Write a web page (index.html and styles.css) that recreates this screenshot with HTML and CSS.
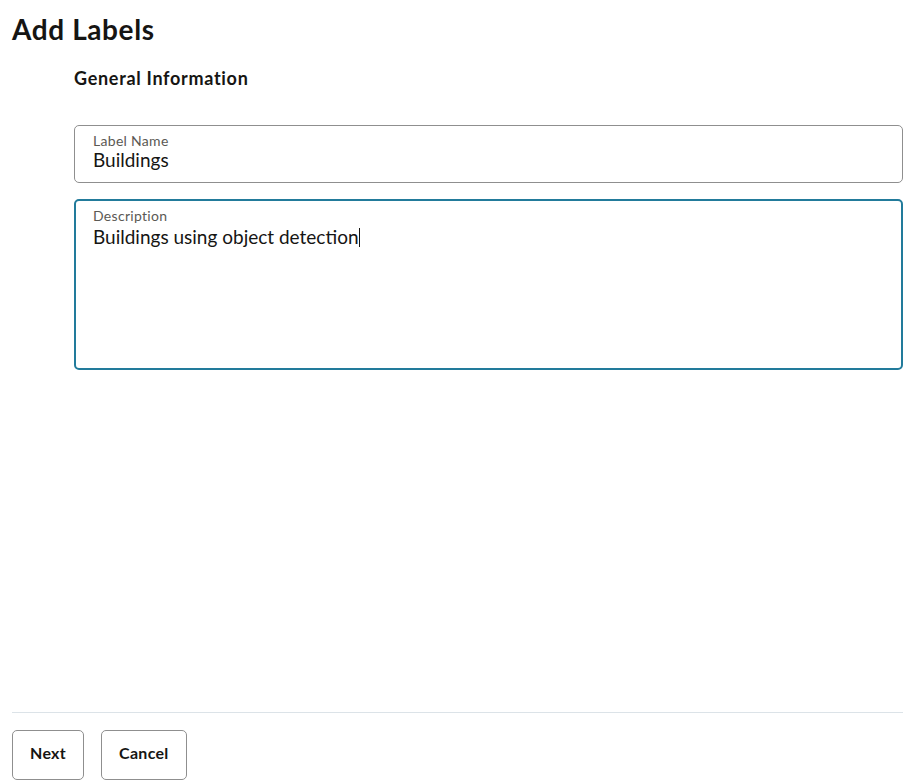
FILE: index.html
```html
<!DOCTYPE html>
<html lang="en">
<head>
  <meta charset="UTF-8">
  <title>Add Labels</title>
  <link rel="stylesheet" href="styles.css">
</head>
<body>
  <div class="page">
    <h1 class="title">Add Labels</h1>

    <!-- Form -->
    <main class="form">
      <h2 class="section-title">General Information</h2>

      <div class="field">
        <label class="field-label">Label Name</label>
        <div class="field-value">Buildings</div>
      </div>

      <div class="field field-area focused">
        <label class="field-label">Description</label>
        <div class="field-value">Buildings using object detection<span class="caret"></span></div>
      </div>
    </main>

    <!-- Footer buttons -->
    <footer class="footer">
      <button class="btn">Next</button>
      <button class="btn">Cancel</button>
    </footer>
  </div>
</body>
</html>
```

FILE: styles.css
```css
html, body {
  margin: 0;
  padding: 0;
  height: 100%;
  background-color: #ffffff;
  font-family: Lato, "Noto Sans", sans-serif;
  color: #161513;
}

.page {
  min-height: 100%;
  box-sizing: border-box;
  padding: 0 5px 4px 12px;
  display: flex;
  flex-direction: column;
}

.title {
  margin: 12px 0 0;
  font-size: 28px;
  font-weight: 700;
  line-height: 34px;
  letter-spacing: 0.6px;
}

.form {
  flex: 1;
  margin-left: 62px;
  display: flex;
  flex-direction: column;
  gap: 16px;
}

.section-title {
  margin: 21px 0 20px;
  font-size: 18px;
  font-weight: 700;
  line-height: 22px;
  letter-spacing: 0.7px;
}

.field {
  border: 1px solid #8f8f8f;
  border-radius: 5px;
  padding: 6px 18px 0;
  height: 58px;
  box-sizing: border-box;
}

.field-area {
  height: 171px;
}

.focused {
  border: 2px solid #227b9b;
  padding: 6px 17px 0;
}

.focused .field-value {
  margin-top: 2px;
}

.field-label {
  display: block;
  font-size: 14px;
  line-height: 17px;
  letter-spacing: 0.3px;
  color: #5b5954;
}

.field-value {
  font-size: 19px;
  line-height: 22px;
}

.caret {
  display: inline-block;
  width: 1px;
  height: 19px;
  background-color: #161513;
  vertical-align: -3px;
}

.footer {
  border-top: 1px solid #dce3e8;
  padding-top: 17px;
  display: flex;
  gap: 17px;
}

.btn {
  height: 50px;
  padding: 0 17px 5px;
  font-family: Lato, "Noto Sans", sans-serif;
  font-size: 16px;
  font-weight: 700;
  letter-spacing: 0.3px;
  color: #161513;
  background-color: #ffffff;
  border: 1px solid #8f8f8f;
  border-radius: 5px;
  cursor: pointer;
}
```
